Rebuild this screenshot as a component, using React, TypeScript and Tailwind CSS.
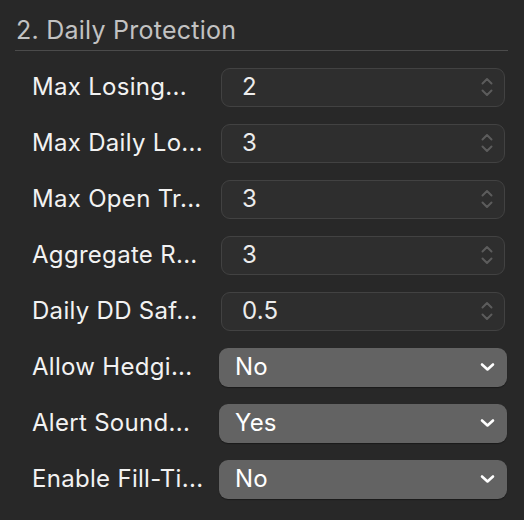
import { ReactNode } from "react";

type Row =
  | { label: string; kind: "number"; value: string }
  | { label: string; kind: "select"; value: string };

// labels are shown clipped, exactly as the panel draws them
const rows: Row[] = [
  { label: "Max Losing...", kind: "number", value: "2" },
  { label: "Max Daily Lo...", kind: "number", value: "3" },
  { label: "Max Open Tr...", kind: "number", value: "3" },
  { label: "Aggregate R...", kind: "number", value: "3" },
  { label: "Daily DD Saf...", kind: "number", value: "0.5" },
  { label: "Allow Hedgi...", kind: "select", value: "No" },
  { label: "Alert Sound...", kind: "select", value: "Yes" },
  { label: "Enable Fill-Ti...", kind: "select", value: "No" },
];

function Stepper() {
  return (
    <svg width="14" height="22" viewBox="0 0 14 22" fill="none" className="shrink-0">
      <path d="M2.5 7.5 L7 3 L11.5 7.5" stroke="#5c5c5c" strokeWidth="2" strokeLinecap="round" strokeLinejoin="round" />
      <path d="M2.5 14.5 L7 19 L11.5 14.5" stroke="#5c5c5c" strokeWidth="2" strokeLinecap="round" strokeLinejoin="round" />
    </svg>
  );
}

function Chevron() {
  return (
    <svg width="15" height="10" viewBox="0 0 15 10" fill="none" className="shrink-0">
      <path d="M2 2.5 L7.5 7.5 L13 2.5" stroke="#ffffff" strokeWidth="2.6" strokeLinecap="round" strokeLinejoin="round" />
    </svg>
  );
}

function Field({ row }: { row: Row }): ReactNode {
  if (row.kind === "number") {
    return (
      <div className="ml-[2px] mr-[3px] flex h-[39px] flex-1 items-center rounded-[9px] border border-[#424242] bg-[#2e2e2e] pl-[20px] pr-[10px]">
        <span className="flex-1 text-[24px] tracking-[0.2px] text-[#ececec]">{row.value}</span>
        <Stepper />
      </div>
    );
  }
  return (
    <div className="mr-[1px] flex h-[39px] flex-1 items-center rounded-[9px] bg-[#636363] pl-[16px] pr-[12px] shadow-[0_1px_1px_rgba(0,0,0,0.35)]">
      <span className="flex-1 text-[24px] tracking-[0.2px] text-white">{row.value}</span>
      <Chevron />
    </div>
  );
}

export default function App() {
  return (
    <div
      className="h-[520px] w-[524px] bg-[#282828] pl-[15px] pr-[16px]"
      style={{ fontFamily: "Inter, 'Noto Sans', sans-serif" }}
    >
      <div className="border-b-[1.5px] border-[#4b4b4b] pt-[15px] pb-[5px] pl-[1px]">
        <h2 className="text-[25px] leading-[30px] tracking-[0.25px] text-[#c2c2c2]">2. Daily Protection</h2>
      </div>
      <div className="flex flex-col pt-[8px]">
        {rows.map((row) => (
          <div key={row.label} className="flex h-[56px] items-center">
            <div className="w-[204px] shrink-0 whitespace-nowrap pl-[17px] text-[24px] tracking-[0.3px] text-[#f2f2f2]">
              {row.label}
            </div>
            <Field row={row} />
          </div>
        ))}
      </div>
    </div>
  );
}
